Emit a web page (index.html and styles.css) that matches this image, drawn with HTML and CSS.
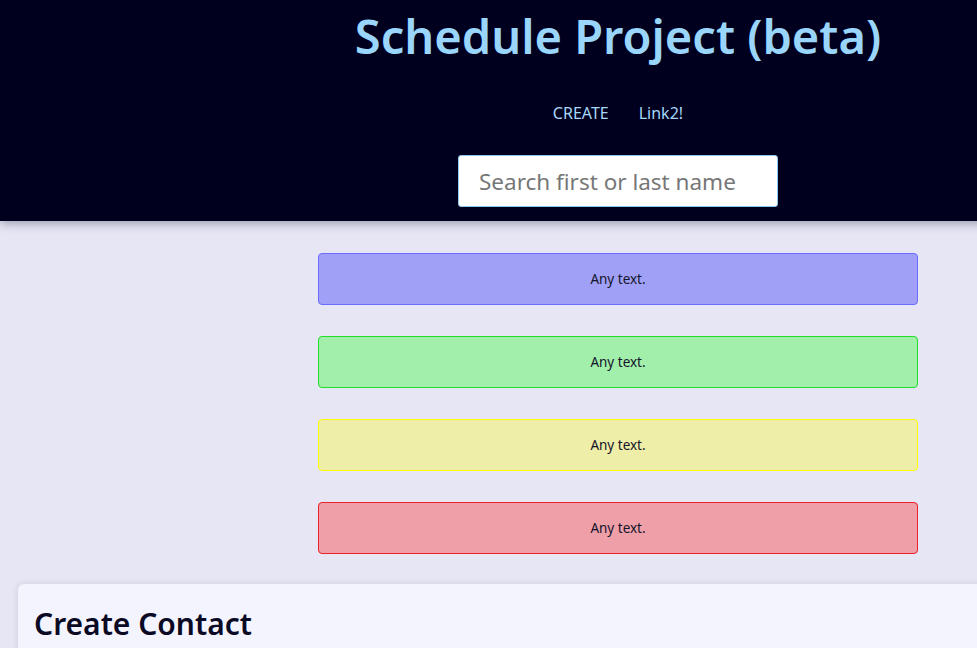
FILE: index.html
```html
<!DOCTYPE html>
<html lang="en">
<head>
<meta charset="utf-8">
<title>Schedule Project (beta)</title>
<link rel="stylesheet" href="styles.css">
</head>
<body>
<div class="page">
  <header class="header">
    <h1 class="title">Schedule Project (beta)</h1>
    <nav class="nav">
      <a class="nav-link" href="#">CREATE</a>
      <a class="nav-link" href="#">Link2!</a>
    </nav>
    <input class="search" type="text" placeholder="Search first or last name">
  </header>
  <main class="main">
    <section class="notes">
      <div class="note note-blue">Any text.</div>
      <div class="note note-green">Any text.</div>
      <div class="note note-yellow">Any text.</div>
      <div class="note note-red">Any text.</div>
    </section>
    <section class="panel">
      <h2 class="panel-title">Create Contact</h2>
    </section>
  </main>
</div>
</body>
</html>
```
FILE: styles.css
```css
html, body {
  margin: 0;
  padding: 0;
  overflow: hidden;
  background: #e6e6f4;
}
body {
  font-family: "Noto Sans", "Open Sans", sans-serif;
  color: #0e0e24;
}
.page {
  width: 1236px;
}
.header {
  background: #00001e;
  padding: 7px 0 14px;
  display: flex;
  flex-direction: column;
  align-items: center;
  box-shadow: 0 2px 10px rgba(0, 0, 40, 0.35);
  position: relative;
}
.title {
  margin: 0;
  font-size: 47px;
  line-height: 58px;
  font-weight: 600;
  color: #9ad6fc;
}
.nav {
  margin-top: 38px;
  display: flex;
  gap: 30px;
  line-height: 20px;
}
.nav-link {
  color: #a6d8f8;
  text-decoration: none;
  font-size: 16px;
}
.search {
  margin-top: 32px;
  width: 320px;
  height: 52px;
  box-sizing: border-box;
  border: 1px solid #8cc8f0;
  border-radius: 3px;
  padding: 0 20px;
  font-family: inherit;
  font-size: 22.5px;
  background: #fff;
  outline: none;
}
.search::placeholder {
  color: #777;
}
.main {
  padding-top: 32px;
}
.notes {
  width: 600px;
  margin: 0 auto;
  display: flex;
  flex-direction: column;
  gap: 31px;
}
.note {
  height: 52px;
  box-sizing: border-box;
  border: 1px solid;
  border-radius: 4px;
  display: flex;
  align-items: center;
  justify-content: center;
  font-size: 13.5px;
  color: #14142a;
}
.note-blue { background: #a0a1f6; border-color: #6b6bff; }
.note-green { background: #a1efab; border-color: #22dd2a; }
.note-yellow { background: #eeeea8; border-color: #ffff00; }
.note-red { background: #ee9fa8; border-color: #ee2028; }
.panel {
  margin: 30px 18px 0;
  background: #f4f4fe;
  border-radius: 6px;
  box-shadow: 0 0 6px rgba(0, 0, 40, 0.12);
  padding: 20px 16px;
  height: 200px;
}
.panel-title {
  margin: 0;
  font-size: 30px;
  line-height: 40px;
  font-weight: 600;
  color: #0a0a24;
}
```
